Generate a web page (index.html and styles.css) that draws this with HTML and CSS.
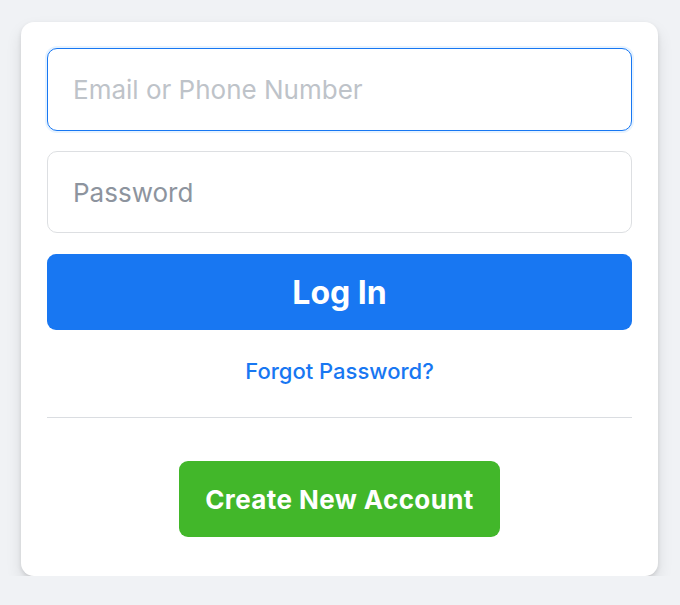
FILE: index.html
```html
<!DOCTYPE html>
<html lang="en">
<head>
<meta charset="utf-8">
<title>Log In</title>
<link rel="stylesheet" href="styles.css">
</head>
<body>
<div class="card">
  <form class="form">
    <input class="field field--focus" type="text" placeholder="Email or Phone Number">
    <input class="field" type="password" placeholder="Password">
    <button class="btn-login" type="button">Log In</button>
  </form>
  <a class="forgot" href="#">Forgot Password?</a>
  <div class="divider"></div>
  <div class="create-wrap">
    <button class="btn-create" type="button">Create New Account</button>
  </div>
</div>
</body>
</html>
```
FILE: styles.css
```css
* { box-sizing: border-box; }
html, body { margin: 0; padding: 0; }
body {
  background: #f0f2f5;
  font-family: Inter, "Helvetica Neue", "Liberation Sans", Arial, sans-serif;
  padding: 22px 0 0 21px;
}
.card {
  width: 637px;
  background: #fff;
  border-radius: 13px;
  box-shadow: 0 2px 4px rgba(0,0,0,.1), 0 8px 16px rgba(0,0,0,.1);
  padding: 26px 26px 39px;
}
.form {
  display: flex;
  flex-direction: column;
  gap: 20px;
}
.field {
  height: 83px;
  width: 100%;
  border: 1px solid #dddfe2;
  border-radius: 10px;
  padding: 0 25px;
  font-family: inherit;
  font-size: 26px;
  color: #1c1e21;
  outline: none;
  background: #fff;
}
.field:last-of-type { height: 82px; }
.field::placeholder { color: #8d949e; }
.field--focus {
  border-color: #1877f2;
  box-shadow: 0 0 0 2px #e7f3ff;
}
.field--focus::placeholder { color: #bec3c9; }
.btn-login {
  height: 76px;
  margin-top: 1px;
  border: none;
  border-radius: 9px;
  background: #1877f2;
  color: #fff;
  font-family: inherit;
  font-size: 32px;
  font-weight: 700;
  cursor: pointer;
}
.forgot {
  display: block;
  text-align: center;
  margin-top: 26px;
  line-height: 30px;
  font-size: 22px;
  font-weight: 500;
  color: #1877f2;
  text-decoration: none;
}
.divider {
  height: 1px;
  background: #dadde1;
  margin-top: 31px;
}
.create-wrap {
  display: flex;
  justify-content: center;
  margin-top: 43px;
}
.btn-create {
  height: 76px;
  padding: 0 26px;
  border: none;
  border-radius: 9px;
  background: #42b72a;
  color: #fff;
  font-family: inherit;
  font-size: 26px;
  font-weight: 700;
  letter-spacing: 0.4px;
  cursor: pointer;
}
```
